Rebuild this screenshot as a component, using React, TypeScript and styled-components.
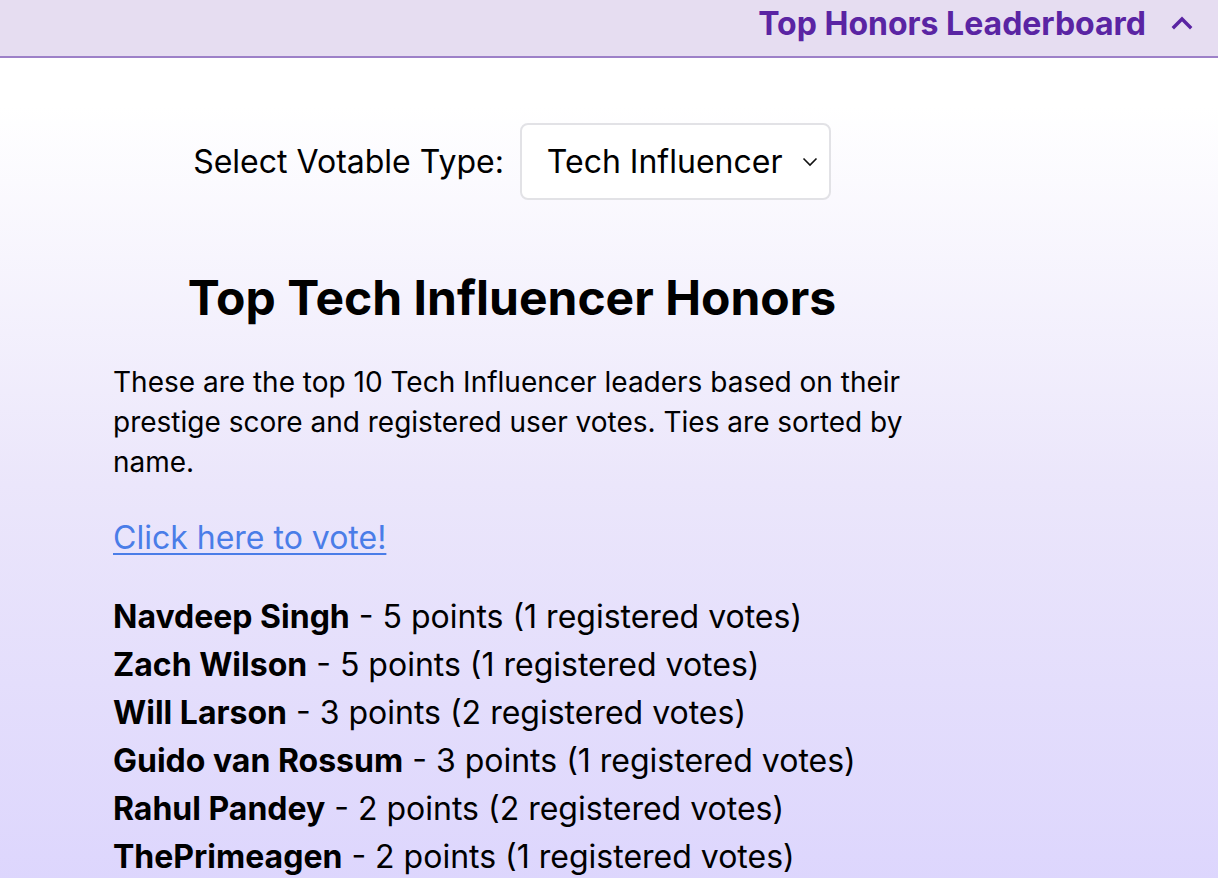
import React, { useState } from "react";
import styled, { createGlobalStyle } from "styled-components";

const GlobalStyle = createGlobalStyle`
  html, body {
    margin: 0;
    padding: 0;
  }
  body {
    font-family: Inter, "Noto Sans", "Liberation Sans", sans-serif;
    color: #000;
    background: linear-gradient(180deg, #ffffff 0%, #ffffff 12%, #ebe6fb 55%, #ddd6fd 100%);
    min-height: 878px;
  }
`;

type Leader = { name: string; points: number; votes: number };

const leaders: Leader[] = [
  { name: "Navdeep Singh", points: 5, votes: 1 },
  { name: "Zach Wilson", points: 5, votes: 1 },
  { name: "Will Larson", points: 3, votes: 2 },
  { name: "Guido van Rossum", points: 3, votes: 1 },
  { name: "Rahul Pandey", points: 2, votes: 2 },
  { name: "ThePrimeagen", points: 2, votes: 1 },
];

const types = ["Tech Influencer", "Company", "Book", "Podcast"];

const App: React.FC = () => {
  const [type, setType] = useState<string>("Tech Influencer");
  const [open, setOpen] = useState<boolean>(true);
  return (
    <>
      <GlobalStyle />
      <StyleHeader>
        <StyleHeaderToggle onClick={() => setOpen(!open)}>
          <span>Top Honors Leaderboard</span>
          <svg width="22" height="14" viewBox="0 0 22 14" fill="none">
            <path
              d={open ? "M3 11 L11 3 L19 11" : "M3 3 L11 11 L19 3"}
              stroke="#5a24a3"
              strokeWidth="3.4"
              strokeLinecap="square"
            />
          </svg>
        </StyleHeaderToggle>
      </StyleHeader>
      {open && (
        <StyleMain>
          <StylePicker>
            <label htmlFor="votable">Select Votable Type:</label>
            <StyleSelectWrap>
              <select
                id="votable"
                value={type}
                onChange={(e) => setType(e.target.value)}
              >
                {types.map((t) => (
                  <option key={t}>{t}</option>
                ))}
              </select>
              <svg width="16" height="10" viewBox="0 0 16 10" fill="none">
                <path d="M1.5 1.5 L8 8 L14.5 1.5" stroke="#111" strokeWidth="1.6" />
              </svg>
            </StyleSelectWrap>
          </StylePicker>

          <StyleTitle>Top {type} Honors</StyleTitle>

          <StyleText>
            These are the top 10 {type} leaders based on their prestige score
            and registered user votes. Ties are sorted by name.
          </StyleText>

          <StyleLink href="#vote">Click here to vote!</StyleLink>

          <StyleList>
            {leaders.map((l) => (
              <li key={l.name}>
                <b>{l.name}</b> - {l.points} points ({l.votes} registered votes)
              </li>
            ))}
          </StyleList>
        </StyleMain>
      )}
    </>
  );
};

const StyleHeader = styled.header`
  height: 56px;
  background: #e6ddf1;
  border-bottom: 2px solid #9d80c8;
  display: flex;
  justify-content: flex-end;
  align-items: center;
  padding-right: 25px;
`;

const StyleHeaderToggle = styled.button`
  display: flex;
  align-items: center;
  gap: 25px;
  border: none;
  background: none;
  padding: 0;
  cursor: pointer;
  font-family: Inter, "Noto Sans", sans-serif;
  font-size: 32px;
  font-weight: 700;
  color: #5a24a3;
  margin-top: -10px;
`;

const StyleMain = styled.main`
  width: 798px;
  margin: 0 0 0 113px;
  padding: 65px 0 0;
`;

const StylePicker = styled.div`
  display: flex;
  justify-content: center;
  align-items: center;
  gap: 16px;
  font-size: 32px;
  label {
    color: #000;
  }
`;

const StyleSelectWrap = styled.div`
  position: relative;
  select {
    appearance: none;
    -webkit-appearance: none;
    width: 311px;
    height: 77px;
    box-sizing: border-box;
    border: 2px solid #e2e2e6;
    border-radius: 8px;
    background: #fff;
    padding: 0 40px 0 25px;
    font-family: Inter, "Noto Sans", sans-serif;
    font-size: 32px;
    color: #000;
    cursor: pointer;
  }
  svg {
    position: absolute;
    right: 13px;
    top: 34px;
    pointer-events: none;
  }
`;

const StyleTitle = styled.h1`
  margin: 64px 0 0;
  font-size: 48px;
  line-height: 68px;
  font-weight: 700;
  text-align: center;
`;

const StyleText = styled.p`
  margin: 30px 0 0;
  font-size: 28px;
  line-height: 40px;
`;

const StyleLink = styled.a`
  display: inline-block;
  margin-top: 36px;
  font-size: 32px;
  line-height: 40px;
  color: #4a7de8;
  text-decoration: underline;
  text-underline-offset: 4px;
  text-decoration-thickness: 2px;
`;

const StyleList = styled.ul`
  list-style: none;
  margin: 35px 0 0;
  padding: 0;
  font-size: 32px;
  line-height: 48px;
  b {
    font-weight: 700;
  }
`;

export default App;
